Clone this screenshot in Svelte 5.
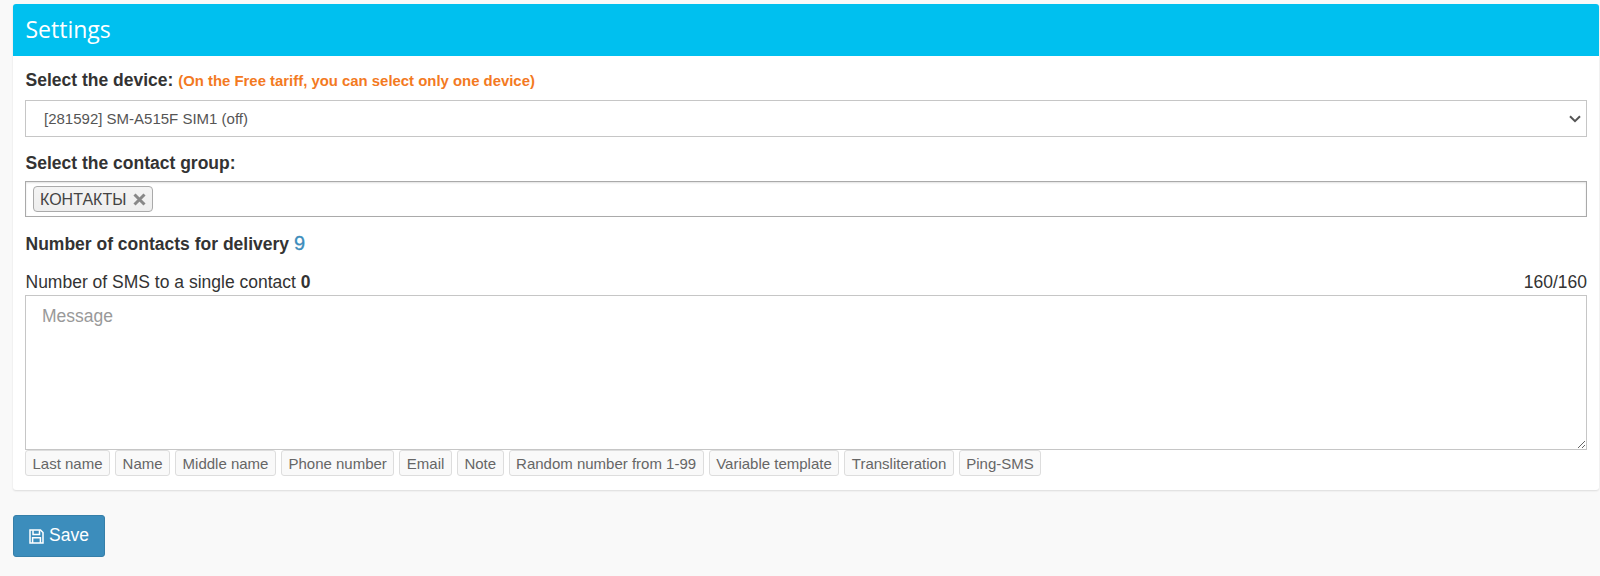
<script>
  const tags = ['Last name', 'Name', 'Middle name', 'Phone number', 'Email', 'Note', 'Random number from 1-99', 'Variable template', 'Transliteration', 'Ping-SMS'];
</script>

<div class="page">
  <section class="box">
    <header class="box-header">Settings</header>
    <div class="box-body">
      <div class="label first">
        <b>Select the device:</b>
        <span class="warn">(On the Free tariff, you can select only one device)</span>
      </div>
      <div class="select-wrap">
        <select class="device">
          <option>[281592] SM-A515F SIM1 (off)</option>
        </select>
        <svg class="chevron" width="12" height="8" viewBox="0 0 12 8" fill="none" stroke="#555" stroke-width="2">
          <path d="M1 1.2l5 5 5-5" />
        </svg>
      </div>

      <div class="label group-label"><b>Select the contact group:</b></div>
      <div class="multi">
        <span class="chip">
          КОНТАКТЫ
          <svg class="chip-x" width="13" height="13" viewBox="0 0 13 13" stroke="#888" stroke-width="3">
            <path d="M1.5 1.5l10 10M11.5 1.5l-10 10" />
          </svg>
        </span>
      </div>

      <div class="label count"><b>Number of contacts for delivery</b> <span class="num">9</span></div>

      <div class="sms-row">
        <span>Number of SMS to a single contact <b>0</b></span>
        <span>160/160</span>
      </div>
      <textarea class="message" placeholder="Message"></textarea>
      <div class="tags">
        {#each tags as tag}
          <button class="tag">{tag}</button>
        {/each}
      </div>
    </div>
  </section>

  <button class="save">
    <svg width="15" height="15" viewBox="0 0 15 15" fill="none" stroke="currentColor" stroke-width="1.5">
      <path d="M1 1h10.5L14 3.5V14H1z" />
      <path d="M4 1.2v4.3h6.5V1.2" />
      <path d="M3.6 14V8.8h7.8V14" />
    </svg>
    <span class="save-text">Save</span>
  </button>
</div>

<style>
  :global(body) {
    background: #f9f9f9;
    font-family: "Liberation Sans", Arial, sans-serif;
    font-size: 17.5px;
    color: #333;
  }

  .page {
    height: 576px;
    padding: 4px 1px 0 13px;
    box-sizing: border-box;
    overflow: hidden;
  }

  .box {
    background: #fff;
    border-radius: 3px;
    box-shadow: 0 1px 2px rgba(0, 0, 0, 0.12);
    height: 486px;
  }

  .box-header {
    height: 52px;
    box-sizing: border-box;
    padding: 8px 12.5px 0;
    background: #00c0ef;
    color: #fff;
    font-family: "Open Sans", sans-serif;
    font-size: 23px;
    line-height: 34px;
    border-radius: 3px 3px 0 0;
  }

  .box-body {
    padding: 0 12px;
  }

  .label {
    line-height: 20px;
    padding-left: 0.5px;
  }

  .first {
    padding-top: 14px;
    height: 30px;
  }

  .warn {
    color: #f37a1f;
    font-size: 14.9px;
    font-weight: bold;
  }

  .select-wrap {
    position: relative;
  }

  .device {
    display: block;
    width: 100%;
    height: 37px;
    padding: 0 18px;
    appearance: none;
    background: #fff;
    border: 1px solid #c6c6c6;
    border-radius: 0;
    color: #555;
    font-family: inherit;
    font-size: 15px;
  }

  .chevron {
    position: absolute;
    right: 6px;
    top: 15px;
  }

  .group-label {
    margin-top: 15px;
    padding-top: 1px;
    height: 28px;
  }

  .multi {
    display: flex;
    align-items: center;
    height: 36px;
    box-sizing: border-box;
    padding-left: 7px;
    border: 1px solid #aaa;
    box-shadow: inset 0 1px 2px rgba(0, 0, 0, 0.12);
  }

  .chip {
    display: flex;
    align-items: center;
    gap: 7px;
    height: 26px;
    box-sizing: border-box;
    padding: 1px 6px 0;
    font-size: 16px;
    color: #444;
    background: linear-gradient(#f4f4f4, #eee);
    border: 1px solid #aaa;
    border-radius: 4px;
  }

  .chip-x {
    display: block;
  }

  .count {
    margin-top: 16px;
    height: 20px;
  }

  .num {
    color: #3c8dbc;
    font-size: 20px;
    -webkit-text-stroke: 0.3px #3c8dbc;
  }

  .sms-row {
    display: flex;
    justify-content: space-between;
    margin-top: 18px;
    padding-left: 0.5px;
    height: 24px;
    line-height: 22px;
  }

  .message {
    display: block;
    width: 100%;
    height: 155px;
    box-sizing: border-box;
    padding: 10px 16px;
    border: 1px solid #c6c6c6;
    border-radius: 0;
    outline: none;
    font-family: inherit;
    font-size: 17.5px;
    color: #555;
  }

  .message::placeholder {
    color: #999;
  }

  .tags {
    display: flex;
    gap: 5px;
  }

  .tag {
    height: 26px;
    padding: 2px 6.5px 0;
    background: #f9f9f9;
    border: 1px solid #ddd;
    border-radius: 3px;
    color: #666;
    font-family: inherit;
    font-size: 15px;
    line-height: 22px;
  }

  .save {
    display: flex;
    align-items: center;
    gap: 5px;
    margin-top: 25px;
    width: 92px;
    height: 42px;
    padding: 0 15px;
    background: #3c8dbc;
    border: 1px solid #367fa9;
    border-radius: 3px;
    color: #fff;
    font-family: inherit;
    font-size: 17.5px;
  }

  .save-text {
    margin-top: -2px;
  }
</style>
